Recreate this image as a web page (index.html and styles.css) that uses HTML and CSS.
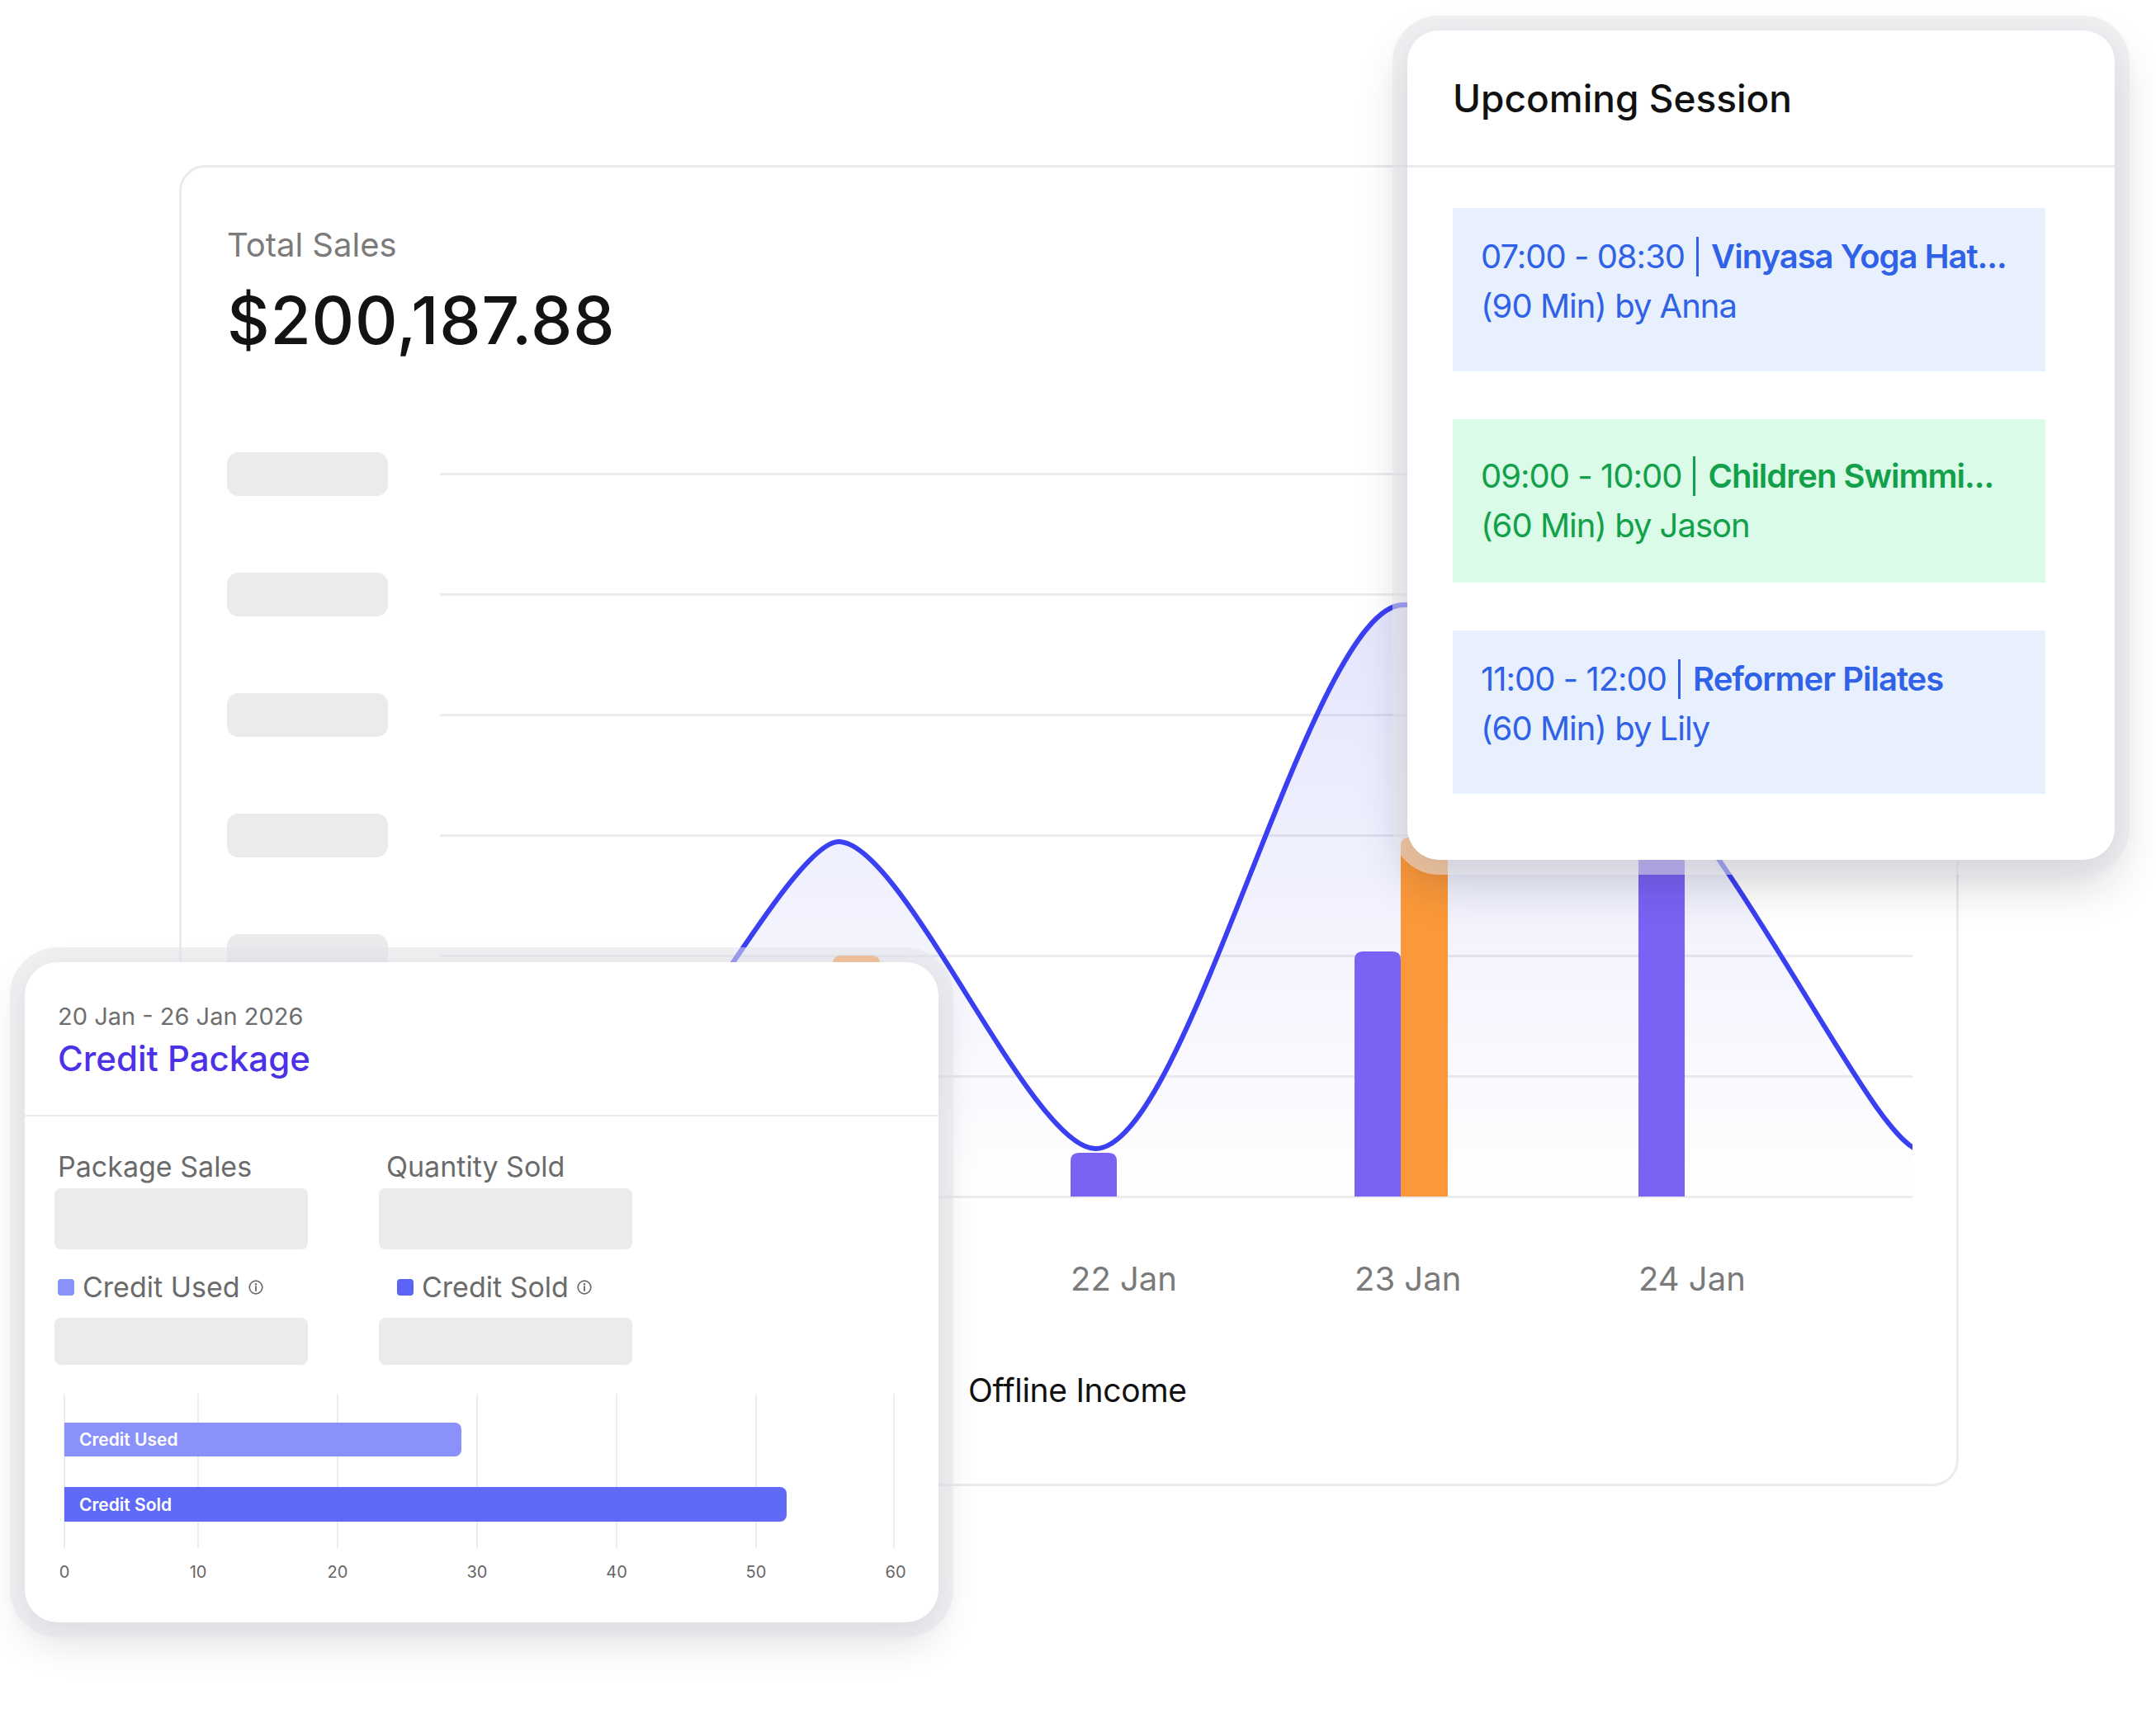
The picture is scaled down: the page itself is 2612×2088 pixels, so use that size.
FILE: index.html
```html
<!DOCTYPE html>
<html lang="en">
<head>
<meta charset="utf-8">
<title>Dashboard</title>
<link rel="stylesheet" href="styles.css">
</head>
<body>
<div class="stage">
  <section class="sales-card">
    <div class="ts-label">Total Sales</div>
    <div class="ts-value">$200,187.88</div>
    <div class="chart">
      <div class="chart-row"><span class="skel"></span><span class="gline"></span></div>
      <div class="chart-row"><span class="skel"></span><span class="gline"></span></div>
      <div class="chart-row"><span class="skel"></span><span class="gline"></span></div>
      <div class="chart-row"><span class="skel"></span><span class="gline"></span></div>
      <div class="chart-row"><span class="skel"></span><span class="gline"></span></div>
      <div class="chart-row"><span class="skel"></span><span class="gline"></span></div>
      <div class="chart-row"><span class="skel"></span><span class="gline"></span></div>
      <svg class="plot" width="1784" height="1022" viewBox="533 501 1784 1022">
        <defs>
          <linearGradient id="areaGrad" gradientUnits="userSpaceOnUse" x1="0" y1="733" x2="0" y2="1450">
            <stop offset="0" stop-color="#6366f1" stop-opacity="0.17"/>
            <stop offset="1" stop-color="#6366f1" stop-opacity="0"/>
          </linearGradient>
        </defs>
        <path d="M705 1395 C767 1395 954 1020 1016 1020 C1094 1020 1249 1392 1327 1392 C1439 1392 1588 733 1700 733 C2000 733 2250 1395 2330 1395 L2330 1450 L705 1450 Z" fill="url(#areaGrad)"/>
        <g fill="#7a62f5">
          <path d="M609 1450 V1310 Q609 1300 619 1300 H655 Q665 1300 665 1310 V1450 Z"/>
          <path d="M1297 1450 V1407 Q1297 1397 1307 1397 H1343 Q1353 1397 1353 1407 V1450 Z"/>
          <path d="M1641 1450 V1163 Q1641 1153 1651 1153 H1687 Q1697 1153 1697 1163 V1450 Z"/>
          <path d="M1985 1450 V910 Q1985 900 1995 900 H2031 Q2041 900 2041 910 V1450 Z"/>
        </g>
        <g fill="#fb983a">
          <path d="M665 1450 V1370 Q665 1360 675 1360 H712 Q722 1360 722 1370 V1450 Z"/>
          <path d="M1009 1450 V1168 Q1009 1158 1019 1158 H1056 Q1066 1158 1066 1168 V1450 Z"/>
          <path d="M1697 1450 V1025 Q1697 1015 1707 1015 H1744 Q1754 1015 1754 1025 V1450 Z"/>
        </g>
        <path d="M705 1395 C767 1395 954 1020 1016 1020 C1094 1020 1249 1392 1327 1392 C1439 1392 1588 733 1700 733 C2000 733 2250 1395 2330 1395" fill="none" stroke="#3b3ff2" stroke-width="6" stroke-linecap="round"/>
      </svg>
    </div>
    <div class="xaxis">
      <span></span><span></span><span>22 Jan</span><span>23 Jan</span><span>24 Jan</span>
    </div>
    <div class="legend">
      <span class="lg-item"><i class="lg-mark lg-offline"></i>Offline Income</span>
    </div>
  </section>

  <section class="session-card">
    <header class="sc-head">Upcoming Session</header>
    <div class="sc-list">
      <div class="sc-item sc-blue">
        <div class="sc-line">07:00 - 08:30<span class="sc-sep"></span><b>Vinyasa Yoga Hat...</b></div>
        <div class="sc-line">(90 Min) by Anna</div>
      </div>
      <div class="sc-item sc-green">
        <div class="sc-line">09:00 - 10:00<span class="sc-sep"></span><b>Children Swimmi...</b></div>
        <div class="sc-line">(60 Min) by Jason</div>
      </div>
      <div class="sc-item sc-blue">
        <div class="sc-line">11:00 - 12:00<span class="sc-sep"></span><b>Reformer Pilates</b></div>
        <div class="sc-line">(60 Min) by Lily</div>
      </div>
    </div>
  </section>

  <section class="credit-card">
    <header class="cp-head">
      <div class="cp-date">20 Jan - 26 Jan 2026</div>
      <div class="cp-title">Credit Package</div>
    </header>
    <div class="cp-body">
      <div class="cp-stats">
        <div class="cp-col">
          <div class="cp-label">Package Sales</div>
          <div class="cp-skel cp-skel-lg"></div>
          <div class="cp-label cp-legend"><i class="sq sq-used"></i>Credit Used<svg class="info" width="20" height="20" viewBox="0 0 20 20"><circle cx="10" cy="10" r="7.8" fill="none" stroke="#6b6b6b" stroke-width="1.7"/><line x1="10" y1="9" x2="10" y2="14" stroke="#6b6b6b" stroke-width="1.9" stroke-linecap="round"/><circle cx="10" cy="6.2" r="1.2" fill="#6b6b6b"/></svg></div>
          <div class="cp-skel cp-skel-sm"></div>
        </div>
        <div class="cp-col cp-col2">
          <div class="cp-label">Quantity Sold</div>
          <div class="cp-skel cp-skel-lg"></div>
          <div class="cp-label cp-legend"><i class="sq sq-sold"></i>Credit Sold<svg class="info" width="20" height="20" viewBox="0 0 20 20"><circle cx="10" cy="10" r="7.8" fill="none" stroke="#6b6b6b" stroke-width="1.7"/><line x1="10" y1="9" x2="10" y2="14" stroke="#6b6b6b" stroke-width="1.9" stroke-linecap="round"/><circle cx="10" cy="6.2" r="1.2" fill="#6b6b6b"/></svg></div>
          <div class="cp-skel cp-skel-sm"></div>
        </div>
      </div>
      <div class="cc-chart">
        <div class="cc-grid"><span></span><span></span><span></span><span></span><span></span><span></span></div>
        <div class="cc-bars">
          <div class="cc-bar cc-used" style="width:47.7%">Credit Used</div>
          <div class="cc-bar cc-sold" style="width:86.8%">Credit Sold</div>
        </div>
      </div>
      <div class="cc-axis"><span>0</span><span>10</span><span>20</span><span>30</span><span>40</span><span>50</span><span>60</span></div>
    </div>
  </section>
</div>
</body>
</html>
```

FILE: styles.css
```css
* { box-sizing: border-box; }
html, body { margin: 0; padding: 0; background: #ffffff; }
body { font-family: Inter, "Noto Sans", "Liberation Sans", sans-serif; color: #111111; }

.stage { position: relative; width: 2612px; height: 2088px; overflow: hidden; }

/* ---------- Total sales card ---------- */
.sales-card {
  margin: 200px 0 0 217px;
  width: 2156px;
  height: 1601px;
  border: 3px solid #ebebed;
  border-radius: 32px;
  padding: 70px 53px 0 55px;
  background: #ffffff;
}
.ts-label { font-size: 40px; line-height: 48px; color: #7b7b7b; }
.ts-value { margin-top: 21px; font-size: 80px; line-height: 92px; font-weight: 500; color: #131313; letter-spacing: 0.8px; }

.chart { position: relative; margin-top: 67px; }
.chart-row { height: 146px; display: flex; align-items: center; }
.skel { width: 195px; height: 53px; border-radius: 14px; background: #eaebed; flex: none; }
.gline { margin-left: 63px; width: 1784px; height: 3px; background: #ececee; flex: none; }
.plot { position: absolute; left: 258px; top: 0; }

.xaxis {
  margin-top: 3px;
  padding-left: 334px;
  display: grid;
  grid-template-columns: repeat(5, 344px);
  height: 48px;
  font-size: 40px; line-height: 48px; color: #7a7a7a;
}

.legend {
  margin-top: 87px;
  padding-left: 840px;
  display: flex;
  font-size: 39px; line-height: 48px; color: #111111; letter-spacing: -0.3px;
}
.lg-item { display: flex; align-items: center; gap: 36px; white-space: nowrap; }
.lg-mark { width: 22px; height: 22px; border-radius: 50%; }
.lg-offline { background: #fb983a; }

/* ---------- Upcoming session card ---------- */
.session-card {
  position: absolute; left: 1705px; top: 37px;
  width: 857px; height: 1005px;
  background: #ffffff;
  border-radius: 38px;
  box-shadow: 0 0 0 18px rgba(228, 228, 233, 0.55), 0 26px 60px rgba(20, 20, 40, 0.2), 0 4px 30px rgba(20, 20, 40, 0.08);
}
.sc-head {
  height: 166px;
  display: flex; align-items: center;
  padding-left: 55px;
  border-bottom: 3px solid #ececef;
  font-size: 46px; font-weight: 500; color: #111111;
}
.sc-list { padding: 49px 84px 0 55px; display: flex; flex-direction: column; gap: 58px; }
.sc-item { height: 198px; padding: 29px 0 0 34px; }
.sc-green { padding-top: 39px; }
.sc-line { font-size: 40px; line-height: 60px; letter-spacing: -1px; white-space: nowrap; display: flex; align-items: center; }
.sc-line b { font-weight: 600; }
.sc-sep { display: inline-block; width: 3px; height: 48px; background: currentColor; margin: 0 15px 0 14px; }
.sc-blue { background: #e8effd; color: #2f62e6; }
.sc-green { background: #d9fbe7; color: #12a04a; }

/* ---------- Credit package card ---------- */
.credit-card {
  position: absolute; left: 30px; top: 1166px;
  width: 1107px; height: 800px;
  background: #ffffff;
  border-radius: 40px;
  box-shadow: 0 0 0 18px rgba(228, 228, 233, 0.55), 0 22px 50px rgba(20, 20, 40, 0.14), 0 4px 30px rgba(20, 20, 40, 0.06);
}
.cp-head { padding: 48px 40px 43px; border-bottom: 2px solid #ececef; }
.cp-date { font-size: 29px; line-height: 36px; color: #6e6e6e; }
.cp-title { margin-top: 8px; font-size: 42px; line-height: 50px; font-weight: 500; color: #4b32e6; }

.cp-body { padding: 40px 36px 0; }
.cp-stats { display: grid; grid-template-columns: 307px 307px; column-gap: 86px; }
.cp-col { display: flex; flex-direction: column; }
.cp-label { font-size: 34px; line-height: 42px; color: #6b6b6b; padding-left: 4px; white-space: nowrap; }
.cp-skel { background: #eaebed; border-radius: 8px; }
.cp-skel-lg { margin-top: 5px; height: 74px; }
.cp-skel-sm { margin-top: 16px; height: 57px; }
.cp-legend { margin-top: 25px; display: flex; align-items: center; gap: 10px; }
.cp-col2 .cp-legend { padding-left: 22px; }
.cp-col2 .cp-label:first-child { padding-left: 9px; }
.info { margin-left: -1px; flex: none; }
.sq { width: 20px; height: 20px; border-radius: 4px; flex: none; }
.sq-used { background: #8a93fb; }
.sq-sold { background: #5b64f6; }

.cc-chart { margin: 35px 0 0 11px; width: 1009px; height: 187px; display: grid; }
.cc-grid, .cc-bars { grid-area: 1 / 1; }
.cc-grid { display: grid; grid-template-columns: 162px repeat(5, 169px) 2px; }
.cc-grid span { border-left: 2px solid #ededef; }
.cc-grid span:last-child { border-right: 2px solid #ededef; }
.cc-bars { padding: 35px 0 0 1px; display: flex; flex-direction: column; gap: 37px; }
.cc-bar {
  height: 41px; border-radius: 0 8px 8px 0;
  padding-left: 18px;
  display: flex; align-items: center;
  font-size: 21px; font-weight: 600; color: #ffffff; white-space: nowrap;
}
.cc-used { background: #8a91fa; }
.cc-sold { background: #5f6bf8; height: 42px; }

.cc-axis {
  margin: 17px 0 0 11px; width: 1009px;
  display: grid; grid-template-columns: 162px repeat(5, 169px) 2px;
  font-size: 20px; line-height: 24px; color: #666666;
}
.cc-axis span { width: 2px; display: flex; justify-content: center; white-space: nowrap; }
```
